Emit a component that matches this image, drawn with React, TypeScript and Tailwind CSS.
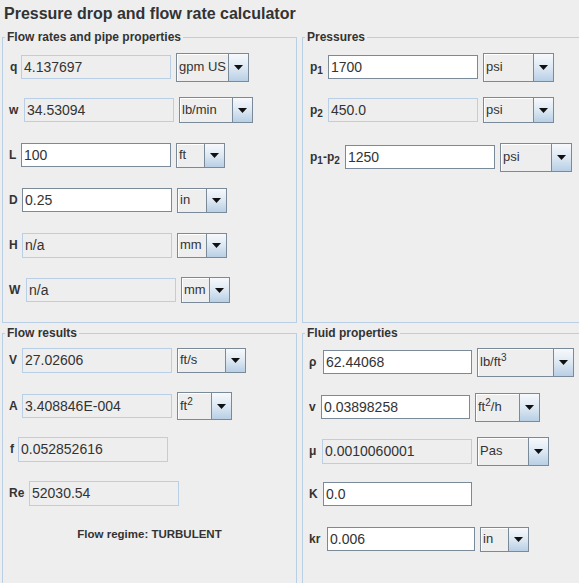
import React from 'react';

const Arrow: React.FC = () => (
  <svg width="9" height="5" viewBox="0 0 9 5" className="block">
    <polygon points="0,0 9,0 4.5,5" fill="#111" />
  </svg>
);

const Combo: React.FC<{ className: string; children: React.ReactNode }> = ({ className, children }) => (
  <div className={`ml-[5px] flex shrink-0 border border-[#7a8a99] bg-[#eeeeee] ${className}`}>
    <div className="flex-1 flex items-center pl-[2px] text-[13px] text-[#333] shadow-[inset_1px_1px_0_#ffffff] whitespace-nowrap overflow-hidden">
      <span>{children}</span>
    </div>
    <div className="w-[20px] shrink-0 border-l border-[#7a8a99] bg-gradient-to-b from-[#f7f9fc] via-[#dde8f3] to-[#b8cfe5] flex items-center justify-center">
      <Arrow />
    </div>
  </div>
);

const Row: React.FC<{
  className: string;
  labelClass: string;
  label: React.ReactNode;
  value: string;
  editable?: boolean;
  fieldClass?: string;
  combo?: { className: string; text: React.ReactNode };
}> = ({ className, labelClass, label, value, editable, fieldClass = 'w-[150px] h-[24px]', combo }) => (
  <div className={`flex items-center h-[24px] ${className}`}>
    <span className={`shrink-0 text-[12px] font-bold text-[#333] whitespace-nowrap ${labelClass}`}>{label}</span>
    <div
      className={`shrink-0 flex items-center pl-[2px] text-[14px] text-[#333] border ${fieldClass} ${
        editable ? 'bg-white border-[#7a8a99]' : 'bg-[#eeeeee] border-[#b8cfe5]'
      }`}
    >
      {value}
    </div>
    {combo && <Combo className={combo.className}>{combo.text}</Combo>}
  </div>
);

const Panel: React.FC<{ title: string; className: string; children: React.ReactNode }> = ({ title, className, children }) => (
  <fieldset className={`border border-[#b8cfe5] min-w-0 ${className}`}>
    <legend className="ml-[2px] px-[2px] text-[12px] leading-[14px] font-bold text-[#333]">{title}</legend>
    {children}
  </fieldset>
);

export default function App() {
  return (
    <div className="w-[579px] h-[583px] overflow-hidden bg-[#eeeeee] font-['Liberation_Sans',Arial,sans-serif] text-[#333]">
      <h1 className="h-[30px] pt-[5px] pl-[4px] text-[16px] leading-[18px] font-bold text-[#333]">
        Pressure drop and flow rate calculator
      </h1>
      <div className="grid grid-cols-[295px_295px] gap-x-[5px] ml-[2px] w-[600px]">
        <Panel title="Flow rates and pipe properties" className="h-[293px]">
          <Row className="mt-[11px] pl-[7px]" labelClass="w-[11px]" label="q" value="4.137697"
            combo={{ className: 'w-[73px] h-[29px]', text: 'gpm US' }} />
          <Row className="mt-[19px] pl-[6px]" labelClass="w-[15px]" label="w" value="34.53094"
            combo={{ className: 'w-[74px] h-[26px]', text: 'lb/min' }} />
          <Row className="mt-[21px] pl-[6px]" labelClass="w-[12px]" label="L" value="100" editable
            combo={{ className: 'w-[49px] h-[25px]', text: 'ft' }} />
          <Row className="mt-[21px] pl-[6px]" labelClass="w-[13px]" label="D" value="0.25" editable
            combo={{ className: 'w-[50px] h-[25px]', text: 'in' }} />
          <Row className="mt-[21px] pl-[6px]" labelClass="w-[13px]" label="H" value="n/a" fieldClass="w-[150px] h-[25px]"
            combo={{ className: 'w-[50px] h-[25px]', text: 'mm' }} />
          <Row className="mt-[21px] pl-[6px]" labelClass="w-[17px]" label="W" value="n/a"
            combo={{ className: 'w-[49px] h-[26px]', text: 'mm' }} />
        </Panel>

        <Panel title="Pressures" className="h-[293px]">
          <Row className="mt-[11px] pl-[7px]" labelClass="w-[18px]" label={<>p<sub className="text-[10px]">1</sub></>} value="1700" editable
            combo={{ className: 'w-[71px] h-[29px]', text: 'psi' }} />
          <Row className="mt-[19px] pl-[7px]" labelClass="w-[18px]" label={<>p<sub className="text-[10px]">2</sub></>} value="450.0"
            combo={{ className: 'w-[71px] h-[26px]', text: 'psi' }} />
          <Row className="mt-[23px] pl-[7px]" labelClass="w-[35px]"
            label={<>p<sub className="text-[10px]">1</sub>-p<sub className="text-[10px]">2</sub></>} value="1250" editable
            combo={{ className: 'w-[72px] h-[29px]', text: 'psi' }} />
        </Panel>

        <Panel title="Flow results" className="mt-[3px] h-[280px]">
          <Row className="mt-[8px] pl-[6px]" labelClass="w-[13px]" label="V" value="27.02606" fieldClass="w-[150px] h-[25px]"
            combo={{ className: 'w-[69px] h-[25px]', text: 'ft/s' }} />
          <Row className="mt-[22px] pl-[6px]" labelClass="w-[13px]" label="A" value="3.408846E-004"
            combo={{ className: 'w-[55px] h-[28px]', text: <>ft<sup className="text-[10px]">2</sup></> }} />
          <Row className="mt-[19px] pl-[7px]" labelClass="w-[8px]" label="f" value="0.052852616" fieldClass="w-[150px] h-[25px]" />
          <Row className="mt-[20px] pl-[6px]" labelClass="w-[20px]" label="Re" value="52030.54" fieldClass="w-[150px] h-[25px]" />
          <div className="mt-[22px] text-center text-[11.5px] leading-[14px] font-bold text-[#333]">Flow regime: TURBULENT</div>
        </Panel>

        <Panel title="Fluid properties" className="mt-[3px] h-[280px]">
          <Row className="mt-[10px] pl-[6px]" labelClass="w-[14px]" label="ρ" value="62.44068" editable fieldClass="w-[149px] h-[24px]"
            combo={{ className: 'w-[97px] h-[29px]', text: <>lb/ft<sup className="text-[10px]">3</sup></> }} />
          <Row className="mt-[21px] pl-[6px]" labelClass="w-[12px]" label="v" value="0.03898258" editable fieldClass="w-[149px] h-[24px]"
            combo={{ className: 'w-[65px] h-[29px]', text: <>ft<sup className="text-[10px]">2</sup>/h</> }} />
          <Row className="mt-[20px] pl-[6px]" labelClass="w-[13px]" label="μ" value="0.0010060001" fieldClass="w-[150px] h-[25px]"
            combo={{ className: 'w-[72px] h-[29px]', text: 'Pas' }} />
          <Row className="mt-[19px] pl-[6px]" labelClass="w-[14px]" label="K" value="0.0" editable fieldClass="w-[149px] h-[24px]" />
          <Row className="mt-[21px] pl-[6px]" labelClass="w-[18px]" label="kr" value="0.006" editable fieldClass="w-[148px] h-[24px]"
            combo={{ className: 'w-[49px] h-[25px]', text: 'in' }} />
        </Panel>
      </div>
    </div>
  );
}
